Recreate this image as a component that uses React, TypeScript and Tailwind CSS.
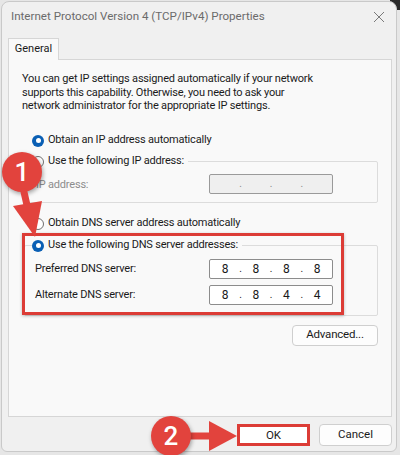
import React from 'react'

const font = { fontFamily: 'Roboto, "Noto Sans", sans-serif' }

function Radio({ checked }: { checked?: boolean }) {
    return checked ? (
        <span className="inline-flex h-[12px] w-[12px] shrink-0 items-center justify-center rounded-full bg-[#0a5fb4]">
            <span className="h-[5px] w-[5px] rounded-full bg-white" />
        </span>
    ) : (
        <span className="inline-block h-[12px] w-[12px] shrink-0 rounded-full border border-[#6f6f6f] bg-white" />
    )
}

function IpBox({ parts, disabled }: { parts: string[]; disabled?: boolean }) {
    return (
        <div className={`flex h-[20px] w-[124px] items-center justify-around rounded-[2px] border px-[6px] text-[12px] ${disabled ? 'border-[#9a9a9a] bg-[#efefef] text-[#8a8a8a]' : 'border-[#8c8c8c] bg-white text-[#1a1a1a]'}`}>
            {parts.map((p, i) => (
                <React.Fragment key={i}>
                    {i > 0 && <span className="text-[10px]">.</span>}
                    <span className="w-[8px] text-center">{p}</span>
                </React.Fragment>
            ))}
        </div>
    )
}

function Badge({ n }: { n: string }) {
    return (
        <div className="flex h-[40px] w-[40px] items-center justify-center rounded-full bg-[#e2433d] text-[26px] font-medium text-white shadow-[1px_2px_4px_rgba(0,0,0,0.35)]" style={font}>
            {n}
        </div>
    )
}

export default function App() {
    return (
        <div className="relative h-[455px] w-[400px] overflow-hidden bg-[#e6e6e6] text-[#1b1b1b]" style={font}>
            {/* window behind, top-right */}
            <div className="absolute right-0 top-0 h-[10px] w-[10px] bg-[#2a2a2a]" />

            <div className="relative ml-[1px] mt-[1px] flex h-[451px] w-[396px] flex-col rounded-t-[8px] rounded-b-[6px] border border-[#c9c9c9] bg-[#f0f0f0]">
                {/* title bar */}
                <div className="flex h-[30px] items-center justify-between pl-[9px] pr-[10px]">
                    <span className="text-[11.6px] text-[#6b6b6b]">Internet Protocol Version 4 (TCP/IPv4) Properties</span>
                    <svg width="12" height="12" viewBox="0 0 12 12" className="mr-[1px]">
                        <path d="M1 1 L11 11 M11 1 L1 11" stroke="#7a7a7a" strokeWidth="1" />
                    </svg>
                </div>

                {/* tabs */}
                <div className="flex pl-[6px] pt-[6px]">
                    <div className="relative z-10 -mb-px flex h-[22px] w-[51px] items-center justify-center border border-b-0 border-[#d6d6d6] bg-[#f9f9f9] text-[11px]">
                        General
                    </div>
                </div>

                {/* panel */}
                <div className="ml-[6px] mr-[4px] flex h-[358px] flex-col border border-[#d6d6d6] bg-[#f9f9f9] pl-[13px] pr-[12px] pt-[12px] text-[11px] tracking-[-0.2px]">
                    <p className="w-[300px] leading-[13.5px]">
                        You can get IP settings assigned automatically if your network supports this capability. Otherwise, you need to ask your network administrator for the appropriate IP settings.
                    </p>

                    <div className="mt-[18px] flex h-[20px] items-center gap-[4px] pl-[10px]">
                        <Radio checked />
                        <span>Obtain an IP address automatically</span>
                    </div>

                    {/* IP group */}
                    <div className="relative mt-[10px] ml-[2px] h-[42px] w-[354px] rounded-[2px] border border-[#dcdcdc]">
                        <div className="absolute -top-[10px] left-[7px] flex h-[20px] items-center gap-[4px] bg-[#f9f9f9] pr-[4px]">
                            <Radio />
                            <span>Use the following IP address:</span>
                        </div>
                        <div className="mt-[12px] flex items-center justify-between pl-[11px] pr-[44px]">
                            <span className="pt-[3px] text-[#8d8d8d]">IP address:</span>
                            <IpBox parts={['', '', '', '']} disabled />
                        </div>
                    </div>

                    <div className="mt-[11px] flex h-[20px] items-center gap-[4px] pl-[10px]">
                        <Radio />
                        <span>Obtain DNS server address automatically</span>
                    </div>

                    {/* DNS group */}
                    <div className="relative mt-[11px] ml-[2px] h-[71px] w-[354px] rounded-[2px] border border-[#dcdcdc]">
                        <div className="absolute -top-[10px] left-[7px] flex h-[20px] items-center gap-[4px] bg-[#f9f9f9] pr-[4px]">
                            <Radio checked />
                            <span>Use the following DNS server addresses:</span>
                        </div>
                        <div className="mt-[13px] flex items-center justify-between pl-[10px] pr-[44px]">
                            <span className="pt-[2px]">Preferred DNS server:</span>
                            <IpBox parts={['8', '8', '8', '8']} />
                        </div>
                        <div className="mt-[6px] flex items-center justify-between pl-[10px] pr-[44px]">
                            <span className="pt-[2px]">Alternate DNS server:</span>
                            <IpBox parts={['8', '8', '4', '4']} />
                        </div>
                        {/* highlight */}
                        <div className="absolute -left-[3px] -top-[13px] h-[82px] w-[322px] border-[3px] border-[#dc3c36] shadow-[0_1px_3px_rgba(0,0,0,0.25)]" />
                    </div>

                    <div className="mt-[9px] flex justify-end pr-[1px]">
                        <button className="h-[21px] w-[86px] rounded-[4px] border border-[#cfcfcf] bg-[#fdfdfd] text-[11.5px]">Advanced...</button>
                    </div>
                </div>

                {/* footer */}
                <div className="flex flex-1 items-center justify-end gap-[9px] pr-[4px] pt-[2px]">
                    <button className="h-[22px] w-[73px] border-[3px] border-[#dc3c36] bg-white text-[11.5px]">OK</button>
                    <button className="h-[22px] w-[73px] rounded-[4px] border border-[#cfcfcf] bg-[#fdfdfd] text-[11.5px]">Cancel</button>
                </div>
            </div>

            {/* annotations */}
            <div className="absolute left-[2px] top-[152px]">
                <Badge n="1" />
            </div>
            <svg className="absolute left-0 top-0" width="400" height="455" viewBox="0 0 400 455">
                <path d="M24 192 L29 214" stroke="#e2433d" strokeWidth="7" strokeLinecap="round" />
                <polygon points="13,206 42,201 35,237" fill="#e2433d" />
                <path d="M190 436 L211 436" stroke="#e2433d" strokeWidth="7" />
                <polygon points="209,421 209,451 237,436" fill="#e2433d" />
            </svg>
            <div className="absolute left-[151px] top-[416px]">
                <Badge n="2" />
            </div>
        </div>
    )
}
